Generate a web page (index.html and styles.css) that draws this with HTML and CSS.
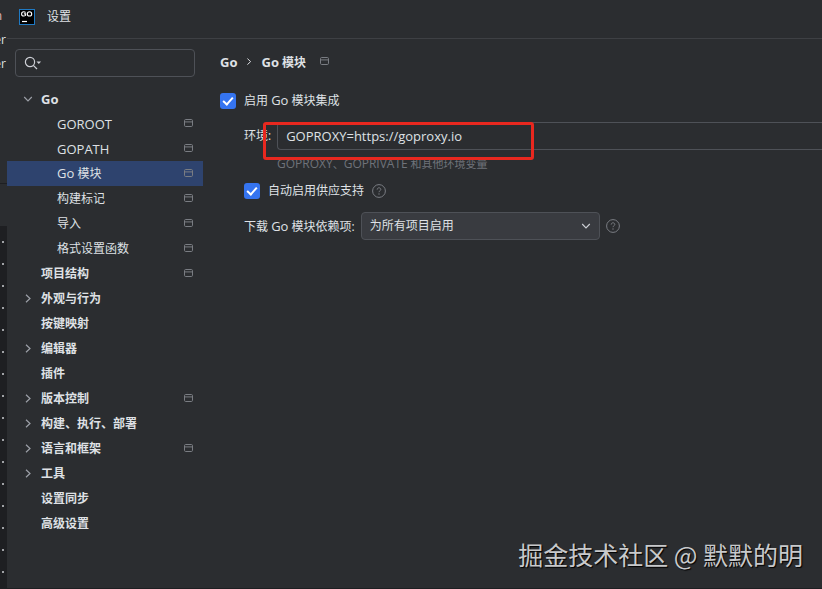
FILE: index.html
```html
<!DOCTYPE html>
<html lang="zh-CN">
<head>
    <meta charset="UTF-8">
    <title>设置</title>
    <link rel="stylesheet" href="styles.css">
</head>
<body>
<!-- Shared icons -->
<svg class="icon-defs" aria-hidden="true">
    <symbol id="project" viewBox="0 0 10 10">
        <rect x="0.5" y="0.5" width="8" height="7" rx="1.2" fill="none" stroke="currentColor"/>
        <path d="M0.5 2.9h8" stroke="currentColor"/>
    </symbol>
    <symbol id="right" viewBox="0 0 10 10">
        <path d="M3 0.7L7 4.5L3 8.3" fill="none" stroke="currentColor" stroke-width="1.2"/>
    </symbol>
    <symbol id="down" viewBox="0 0 10 10">
        <path d="M1.2 3L5 7L8.8 3" fill="none" stroke="currentColor" stroke-width="1.1"/>
    </symbol>
    <symbol id="help" viewBox="0 0 14 14">
        <circle cx="7" cy="7" r="6.4" fill="none" stroke="currentColor"/>
        <path d="M5.2 5.6c0-1.1.8-1.8 1.8-1.8s1.8.7 1.8 1.7c0 1.2-1.8 1.3-1.8 2.7" fill="none" stroke="currentColor"/>
        <circle cx="7" cy="10" r="0.7" fill="currentColor"/>
    </symbol>
</svg>

<!-- Edge of the editor behind the dialog -->
<div class="backdrop">
    <div class="backdrop-menu">
        <span class="backdrop-text">n</span>
        <span class="backdrop-text">er</span>
        <span class="backdrop-text">er</span>
    </div>
    <div class="backdrop-tabs"></div>
    <div class="backdrop-gutter"></div>
</div>

<div class="dialog">
    <header class="titlebar">
        <svg class="logo" viewBox="0 0 16 16">
            <rect x="0.5" y="0.5" width="15" height="15" fill="#000" stroke="#1f7ac4"/>
            <path d="M6.6 3.5C5.9 2.9 5.3 2.7 4.7 2.7C3.4 2.7 2.6 3.6 2.6 4.9S3.4 7 4.7 7C5.4 7 6 6.8 6.6 6.4V4.9H4.9" fill="none" stroke="#fff" stroke-width="1.1"/>
            <ellipse cx="10.5" cy="4.9" rx="2.2" ry="2.1" fill="none" stroke="#fff" stroke-width="1.1"/>
            <path d="M3 12.5h5" stroke="#fff" stroke-width="1.2"/>
        </svg>
        <span>设置</span>
    </header>

    <div class="dialog-body">
        <aside class="sidebar">
            <label class="search">
                <svg class="search-icon" viewBox="0 0 18 14">
                    <circle cx="6" cy="6" r="4.6" fill="none" stroke="currentColor" stroke-width="1.2"/>
                    <path d="M9.3 9.3L13 13" stroke="currentColor" stroke-width="1.2"/>
                    <path d="M12.5 5.5h4.6l-2.3 2.4z" fill="currentColor"/>
                </svg>
                <input type="text" class="search-input" aria-label="搜索">
            </label>
            <nav class="tree">
                <a href="#" class="tree-item group"><svg class="arrow"><use href="#down"/></svg><span class="name latin">Go</span></a>
                <a href="#" class="tree-item child"><span class="name latin">GOROOT</span><svg class="project"><use href="#project"/></svg></a>
                <a href="#" class="tree-item child"><span class="name latin">GOPATH</span><svg class="project"><use href="#project"/></svg></a>
                <a href="#" class="tree-item child selected"><span class="name"><span class="latin">Go</span> 模块</span><svg class="project"><use href="#project"/></svg></a>
                <a href="#" class="tree-item child"><span class="name">构建标记</span><svg class="project"><use href="#project"/></svg></a>
                <a href="#" class="tree-item child"><span class="name">导入</span><svg class="project"><use href="#project"/></svg></a>
                <a href="#" class="tree-item child"><span class="name">格式设置函数</span><svg class="project"><use href="#project"/></svg></a>
                <a href="#" class="tree-item"><span class="name">项目结构</span><svg class="project"><use href="#project"/></svg></a>
                <a href="#" class="tree-item group"><svg class="arrow"><use href="#right"/></svg><span class="name">外观与行为</span></a>
                <a href="#" class="tree-item"><span class="name">按键映射</span></a>
                <a href="#" class="tree-item group"><svg class="arrow"><use href="#right"/></svg><span class="name">编辑器</span></a>
                <a href="#" class="tree-item"><span class="name">插件</span></a>
                <a href="#" class="tree-item group"><svg class="arrow"><use href="#right"/></svg><span class="name">版本控制</span><svg class="project"><use href="#project"/></svg></a>
                <a href="#" class="tree-item group"><svg class="arrow"><use href="#right"/></svg><span class="name">构建、执行、部署</span></a>
                <a href="#" class="tree-item group"><svg class="arrow"><use href="#right"/></svg><span class="name">语言和框架</span><svg class="project"><use href="#project"/></svg></a>
                <a href="#" class="tree-item group"><svg class="arrow"><use href="#right"/></svg><span class="name">工具</span></a>
                <a href="#" class="tree-item"><span class="name">设置同步</span></a>
                <a href="#" class="tree-item"><span class="name">高级设置</span></a>
            </nav>
        </aside>

        <main class="content">
            <div class="breadcrumb">
                <span class="latin">Go</span>
                <svg class="separator" viewBox="0 0 10 10"><use href="#right"/></svg>
                <span><span class="latin">Go</span> 模块</span>
                <svg class="project"><use href="#project"/></svg>
            </div>

            <div class="row">
                <input type="checkbox" class="checkbox" id="enableModules" checked>
                <label for="enableModules">启用 <span class="latin">Go</span> 模块集成</label>
            </div>

            <div class="options">
                <div class="row env-row">
                    <label for="environment">环境:</label>
                    <input type="text" class="env-input" id="environment" value="GOPROXY=https://goproxy.io">
                    <div class="highlight"></div>
                </div>
                <p class="hint"><span class="latin">GOPROXY</span>、<span class="latin">GOPRIVATE</span> 和其他环境变量</p>
                <div class="row vendoring-row">
                    <input type="checkbox" class="checkbox" id="vendoring" checked>
                    <label for="vendoring">自动启用供应支持</label>
                    <svg class="help"><use href="#help"/></svg>
                </div>
                <div class="row download-row">
                    <label for="download">下载 <span class="latin">Go</span> 模块依赖项:</label>
                    <div class="select-box">
                        <select class="select" id="download">
                            <option>为所有项目启用</option>
                        </select>
                        <svg class="select-arrow"><use href="#down"/></svg>
                    </div>
                    <svg class="help"><use href="#help"/></svg>
                </div>
            </div>
        </main>
    </div>
</div>

<div class="watermark">掘金技术社区 @ 默默的明</div>
</body>
</html>
```
FILE: styles.css
```css
* {
    box-sizing: border-box;
}
body {
    display: flex;
    height: 100vh;
    margin: 0;
    overflow: hidden;
    background-color: #2b2d30;
    color: #dfe1e5;
    font-family: "Open Sans", "Noto Sans CJK SC", sans-serif;
    font-size: 12px;
    line-height: 16px;
}
input,
select {
    margin: 0;
    color: inherit;
    font: inherit;
    outline: none;
}
.latin {
    font-size: 13px;
}
.icon-defs {
    position: absolute;
    width: 0;
    height: 0;
}

/* Window behind */
.backdrop {
    display: flex;
    flex-direction: column;
    flex: none;
    width: 7px;
    overflow: hidden;
}
.backdrop-menu {
    display: flex;
    flex-direction: column;
    align-items: flex-end;
    gap: 8px;
    height: 184px;
    padding: 8px 1px 0 0;
    border-bottom: 1px solid #1e1f22;
}
.backdrop-text:first-child {
    padding-right: 4px;
    color: #e0b8b8;
}
.backdrop-tabs {
    height: 42px;
}
.backdrop-gutter {
    flex: 1;
    background: radial-gradient(circle at 3px 16px, #a0a2a6 1px, transparent 1px) 0 0 / 7px 22px #1e1f22;
}

/* Dialog */
.dialog {
    display: flex;
    flex-direction: column;
    flex: 1;
    min-width: 0;
    border-bottom: 1px solid #1e1f22;
}
.titlebar {
    display: flex;
    align-items: center;
    gap: 12px;
    height: 39px;
    padding: 0 12px 4px;
    border-bottom: 1px solid #3e4044;
}
.logo {
    width: 16px;
    height: 16px;
}
.dialog-body {
    display: flex;
    flex: 1;
}
.sidebar {
    flex: none;
    width: 196px;
}
.search {
    display: flex;
    align-items: center;
    height: 28px;
    margin: 10px 8px 9px;
    padding: 0 8px;
    border: 1px solid #4e5157;
    border-radius: 4px;
}
.search-icon {
    flex: none;
    width: 18px;
    height: 14px;
    color: #ced0d6;
}
.search-input {
    flex: 1;
    min-width: 0;
    border: none;
    background: none;
}

/* Settings tree */
.tree-item {
    display: flex;
    align-items: center;
    height: 25px;
    padding: 0 9px 0 34px;
    color: inherit;
    font-weight: 700;
    text-decoration: none;
}
.tree-item.group {
    padding-left: 16px;
}
.tree-item.child {
    padding-left: 50px;
    font-weight: 400;
}
.tree-item.selected {
    background-color: #2e436e;
}
.arrow {
    width: 10px;
    height: 10px;
    margin-right: 8px;
    color: #9da0a8;
}
.name {
    flex: 1;
}
.project {
    width: 10px;
    height: 10px;
    color: #7a7d83;
}

/* Settings page */
.content {
    flex: 1;
    min-width: 0;
    padding: 14px 0 0 17px;
}
.breadcrumb {
    display: flex;
    align-items: center;
    height: 18px;
    margin-bottom: 21px;
    font-weight: 700;
}
.separator {
    width: 8px;
    height: 8px;
    margin: 0 8px;
}
.breadcrumb .project {
    margin-left: 14px;
}
.row {
    display: flex;
    align-items: center;
    gap: 8px;
}
.checkbox {
    position: relative;
    width: 16px;
    height: 16px;
    border-radius: 3px;
    background-color: #3574f0;
    appearance: none;
}
.checkbox:checked::after {
    content: "";
    position: absolute;
    top: 2px;
    left: 5px;
    width: 6px;
    height: 10px;
    box-sizing: border-box;
    border: solid #ffffff;
    border-width: 0 2px 2px 0;
    transform: rotate(42deg);
}
.options {
    padding: 13px 0 0 24px;
}
.env-row {
    position: relative;
    gap: 6px;
}
.env-input {
    flex: 1;
    min-width: 0;
    height: 28px;
    padding: 0 8px;
    border: 1px solid #4e5157;
    border-right: none;
    border-radius: 4px 0 0 4px;
    background: none;
    font-size: 13px;
}
.highlight {
    position: absolute;
    top: 0;
    left: 19px;
    width: 271px;
    height: 38px;
    border: 3px solid #e8281f;
    border-radius: 3px;
    pointer-events: none;
}
.hint {
    margin: 6px 0 11px 33px;
    color: #6f737a;
    font-size: 11px;
}
.hint .latin {
    font-size: 12px;
}
.vendoring-row {
    margin-bottom: 13px;
}
.help {
    width: 14px;
    height: 14px;
    color: #7a7d83;
}
.download-row {
    gap: 6px;
}
.select-box {
    position: relative;
    width: 239px;
}
.select {
    width: 100%;
    height: 28px;
    padding: 0 8px;
    border: 1px solid #4e5157;
    border-radius: 4px;
    background-color: #393b40;
    appearance: none;
}
.select-arrow {
    position: absolute;
    top: 9px;
    right: 9px;
    width: 10px;
    height: 10px;
    color: #ced0d6;
    pointer-events: none;
}

.watermark {
    position: absolute;
    right: 19px;
    bottom: 17px;
    color: #c8c9cb;
    font-family: "Noto Sans CJK SC", sans-serif;
    font-size: 25px;
    line-height: 36px;
    text-shadow: 1px 1px 1px #000000;
}
```
